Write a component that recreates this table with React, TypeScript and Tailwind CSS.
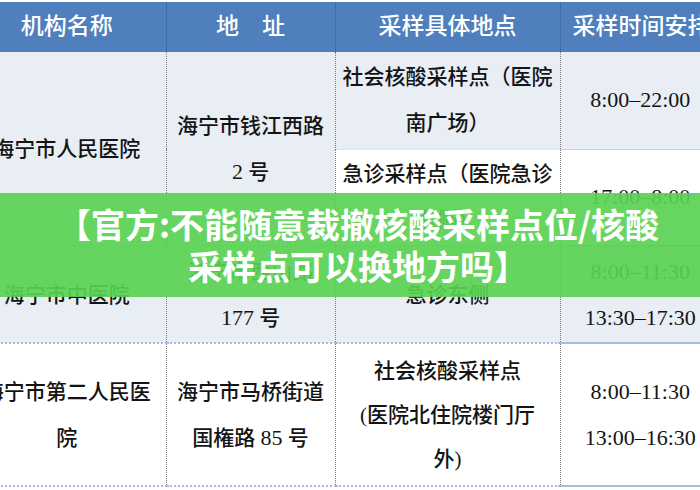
import React from "react";

const bodyFont = {
  fontFamily: '"Liberation Serif", "Noto Sans CJK SC", serif',
};

function N({ children }: { children: React.ReactNode }) {
  return <span className="text-[22px]">{children}</span>;
}

export default function App() {
  const vb = "border-r border-dotted border-r-[#7a7a7a]";
  const td =
    "text-center align-middle px-1 text-[21px] leading-[46px] font-medium text-[#141414]";
  const light = "bg-[#e9edf4]";
  const rowB = "border-b-2 border-b-[#a8bddd]";
  const subB = "border-b border-b-[#c9d3e3]";
  const th = "text-white text-[23px] font-medium";
  return (
    <div className="relative w-[700px] h-[490px] overflow-hidden bg-white">
      <div className="pt-[2px]">
        <table
          className="table-fixed border-collapse ml-[-32px] w-[752px]"
          style={bodyFont}
        >
          <colgroup>
            <col className="w-[198px]" />
            <col className="w-[169px]" />
            <col className="w-[225px]" />
            <col className="w-[160px]" />
          </colgroup>
          <thead>
            <tr className="h-[50px] bg-[#4f80bd]">
              <th className={`border-r border-r-[#3f6ba6] text-center ${th}`}>
                机构名称
              </th>
              <th className={`border-r border-r-[#3f6ba6] text-center ${th}`}>
                地　址
              </th>
              <th className={`border-r border-r-[#3f6ba6] text-center ${th}`}>
                采样具体地点
              </th>
              <th className={`text-left pl-[12px] whitespace-nowrap ${th}`}>
                采样时间安排
              </th>
            </tr>
          </thead>
          <tbody>
            <tr className="h-[97px]">
              <td rowSpan={2} className={`${td} ${light} ${vb} ${rowB}`}>
                海宁市人民医院
              </td>
              <td rowSpan={2} className={`${td} ${light} ${vb} ${rowB}`}>
                海宁市钱江西路
                <br />
                <N>2</N> 号
              </td>
              <td className={`${td} ${light} ${vb} ${subB}`}>
                社会核酸采样点（医院
                <br />
                南广场）
              </td>
              <td className={`${td} ${light} ${subB} whitespace-nowrap`}>
                <N>8:00–22:00</N>
              </td>
            </tr>
            <tr className="h-[97px]">
              <td className={`${td} bg-white ${vb} ${rowB}`}>
                急诊采样点（医院急诊
                <br />
                东侧）
              </td>
              <td className={`${td} bg-white ${rowB} whitespace-nowrap`}>
                <N>17:00–8:00</N>
              </td>
            </tr>
            <tr className="h-[97px]">
              <td className={`${td} ${light} ${vb} ${rowB}`}>海宁市中医院</td>
              <td className={`${td} ${light} ${vb} ${rowB}`}>
                海宁市西山路
                <br />
                <N>177</N> 号
              </td>
              <td className={`${td} ${light} ${vb} ${rowB}`}>急诊东侧</td>
              <td className={`${td} ${light} ${rowB} whitespace-nowrap`}>
                <N>8:00–11:30</N>
                <br />
                <N>13:30–17:30</N>
              </td>
            </tr>
            <tr className="h-[143px]">
              <td className={`${td} bg-white ${vb} ${rowB}`}>
                海宁市第二人民医
                <br />院
              </td>
              <td className={`${td} bg-white ${vb} ${rowB}`}>
                海宁市马桥街道
                <br />
                国権路 <N>85</N> 号
              </td>
              <td className={`${td} bg-white ${vb} ${rowB} !leading-[44px]`}>
                社会核酸采样点
                <br />
                (医院北住院楼门厅
                <br />
                外)
              </td>
              <td className={`${td} bg-white ${rowB} whitespace-nowrap`}>
                <N>8:00–11:30</N>
                <br />
                <N>13:00–16:30</N>
              </td>
            </tr>
          </tbody>
        </table>
      </div>

      <div
        className="absolute left-0 right-0 top-[193px] h-[104px] bg-[rgba(90,210,82,0.92)] py-[10px] pl-[16px] text-center text-white font-bold text-[34px] leading-[42px] whitespace-nowrap"
        style={{ fontFamily: '"Noto Sans CJK SC", "Noto Sans", sans-serif' }}
      >
        【官方:不能随意裁撤核酸采样点位/核酸
        <br />
        采样点可以换地方吗】
      </div>
    </div>
  );
}
